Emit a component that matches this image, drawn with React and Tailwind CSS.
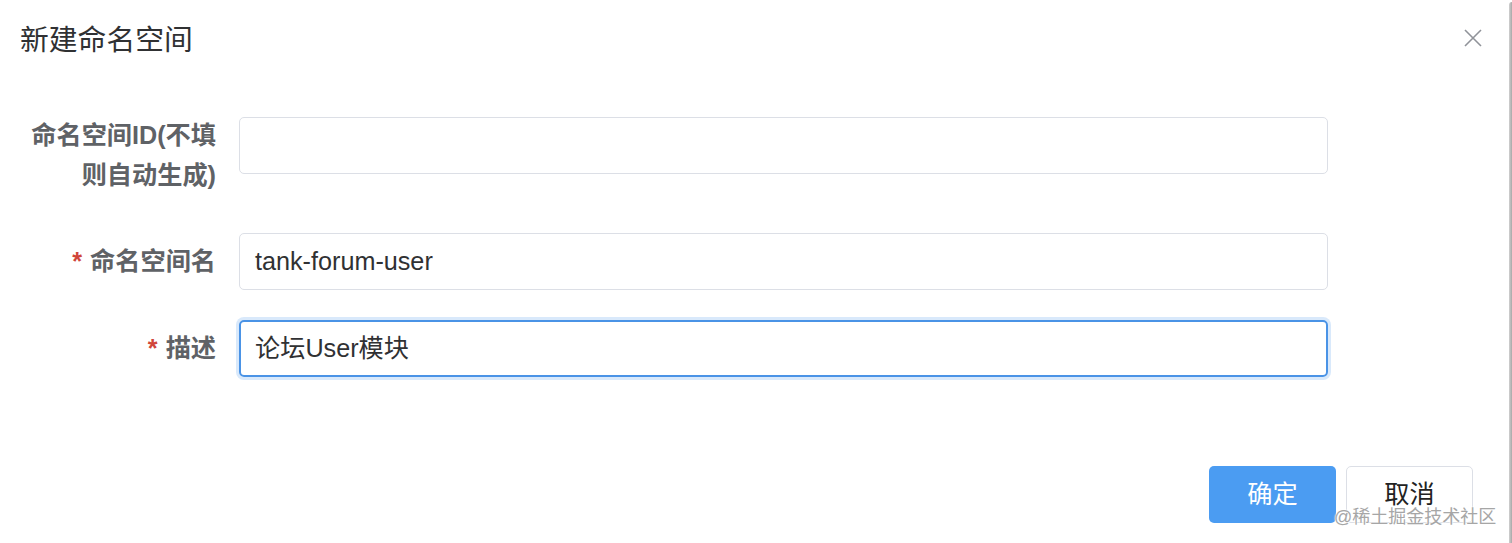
import React from "react";

const FONT = { fontFamily: '"Liberation Sans", Arial, "Noto Sans CJK SC", sans-serif' };

export default function App() {
  return (
    <div className="relative w-[1512px] h-[543px] bg-white overflow-hidden flex" style={FONT}>
      <div className="flex-1 flex flex-col">
        <div className="h-[80px] flex items-center justify-between pl-[20px] pr-[27px]">
          <h1 className="text-[28.8px] leading-none text-[#303133] font-normal">新建命名空间</h1>
          <svg width="18" height="18" viewBox="0 0 18 18" className="mt-[-4px]">
            <path d="M1 1L17 17M17 1L1 17" stroke="#909399" strokeWidth="1.6" />
          </svg>
        </div>

        <div className="pt-[35px]">
          <div className="flex items-start">
            <div className="shrink-0 w-[239px] pl-[20px] pr-[23px] text-right text-[25.2px] leading-[40px] font-bold text-[#5f6266]">
              命名空间ID(不填则自动生成)
            </div>
            <div className="shrink-0 mt-[2px] w-[1089px] h-[57px] border border-[#dcdfe6] rounded-[5px]" />
          </div>

          <div className="flex items-start mt-[38px]">
            <div className="shrink-0 w-[239px] pl-[20px] pr-[23px] text-right text-[25.2px] leading-[57px] font-bold text-[#5f6266]">
              <span className="text-[#d0453a] mr-[8px]">*</span>命名空间名
            </div>
            <div className="shrink-0 w-[1089px] h-[57px] border border-[#dcdfe6] rounded-[5px] flex items-center pl-[15px] text-[25.2px] text-[#303133]">
              tank-forum-user
            </div>
          </div>

          <div className="flex items-start mt-[30px]">
            <div className="shrink-0 w-[239px] pl-[20px] pr-[23px] text-right text-[25.2px] leading-[57px] font-bold text-[#5f6266]">
              <span className="text-[#d0453a] mr-[8px]">*</span>描述
            </div>
            <div className="shrink-0 w-[1089px] h-[57px] border-2 border-[#4a93e6] rounded-[5px] shadow-[0_0_0_3px_#d9e9fb] flex items-center pl-[14px] text-[25.2px] text-[#303133]">
              论坛User模块
            </div>
          </div>
        </div>

        <div className="mt-[89px] flex justify-end gap-[10px] pr-[36px]">
          <button className="w-[127px] h-[57px] rounded-[5px] bg-[#4b9cf2] text-white text-[25.2px]">确定</button>
          <button className="w-[127px] h-[57px] rounded-[5px] bg-white border border-[#dcdfe6] text-[#222] text-[25.2px]">取消</button>
        </div>
      </div>
      <div className="w-[3px] mt-[2px] rounded-tl-[4px] bg-gradient-to-r from-[#d0d0d0] to-[#a8a8a8]" />

      <div
        className="absolute left-[1334px] top-[504px] text-[18px] leading-[26px] text-[#a6a6a6]"
        style={{ textShadow: "0 0 2px #fff, 0 0 2px #fff, 0 0 1px #fff" }}
      >
        @稀土掘金技术社区
      </div>
    </div>
  );
}
